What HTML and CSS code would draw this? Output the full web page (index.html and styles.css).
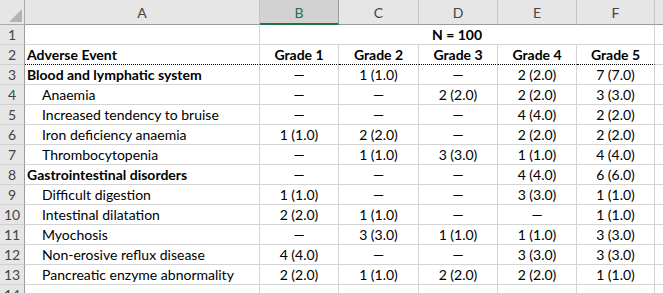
FILE: index.html
```html
<!DOCTYPE html>
<html>
<head>
<meta charset="utf-8">
<link rel="stylesheet" href="styles.css">
</head>
<body>
<div class="sheet">
  <div class="corner"><span class="tri"></span></div>
  <div class="ch">A</div>
  <div class="ch sel">B</div>
  <div class="ch">C</div>
  <div class="ch">D</div>
  <div class="ch">E</div>
  <div class="ch">F</div>
  <div class="ch last"></div>

  <div class="rh">1</div>
  <div class="c"></div>
  <div class="c merged b">N = 100</div>
  <div class="c"></div>

  <div class="rh">2</div>
  <div class="c b dot">Adverse Event</div>
  <div class="c n b dot">Grade 1</div>
  <div class="c n b dot">Grade 2</div>
  <div class="c n b dot">Grade 3</div>
  <div class="c n b dot">Grade 4</div>
  <div class="c n b dot">Grade 5</div>
  <div class="c"></div>

  <div class="rh">3</div>
  <div class="c b">Blood and lymphatic system</div>
  <div class="c n">—</div><div class="c n">1 (1.0)</div><div class="c n">—</div><div class="c n">2 (2.0)</div><div class="c n">7 (7.0)</div>
  <div class="c"></div>

  <div class="rh">4</div>
  <div class="c ind">Anaemia</div>
  <div class="c n">—</div><div class="c n">—</div><div class="c n">2 (2.0)</div><div class="c n">2 (2.0)</div><div class="c n">3 (3.0)</div>
  <div class="c"></div>

  <div class="rh">5</div>
  <div class="c ind">Increased tendency to bruise</div>
  <div class="c n">—</div><div class="c n">—</div><div class="c n">—</div><div class="c n">4 (4.0)</div><div class="c n">2 (2.0)</div>
  <div class="c"></div>

  <div class="rh">6</div>
  <div class="c ind">Iron deficiency anaemia</div>
  <div class="c n">1 (1.0)</div><div class="c n">2 (2.0)</div><div class="c n">—</div><div class="c n">2 (2.0)</div><div class="c n">2 (2.0)</div>
  <div class="c"></div>

  <div class="rh">7</div>
  <div class="c ind">Thrombocytopenia</div>
  <div class="c n">—</div><div class="c n">1 (1.0)</div><div class="c n">3 (3.0)</div><div class="c n">1 (1.0)</div><div class="c n">4 (4.0)</div>
  <div class="c"></div>

  <div class="rh">8</div>
  <div class="c b">Gastrointestinal disorders</div>
  <div class="c n">—</div><div class="c n">—</div><div class="c n">—</div><div class="c n">4 (4.0)</div><div class="c n">6 (6.0)</div>
  <div class="c"></div>

  <div class="rh">9</div>
  <div class="c ind">Difficult digestion</div>
  <div class="c n">1 (1.0)</div><div class="c n">—</div><div class="c n">—</div><div class="c n">3 (3.0)</div><div class="c n">1 (1.0)</div>
  <div class="c"></div>

  <div class="rh">10</div>
  <div class="c ind">Intestinal dilatation</div>
  <div class="c n">2 (2.0)</div><div class="c n">1 (1.0)</div><div class="c n">—</div><div class="c n">—</div><div class="c n">1 (1.0)</div>
  <div class="c"></div>

  <div class="rh">11</div>
  <div class="c ind">Myochosis</div>
  <div class="c n">—</div><div class="c n">3 (3.0)</div><div class="c n">1 (1.0)</div><div class="c n">1 (1.0)</div><div class="c n">3 (3.0)</div>
  <div class="c"></div>

  <div class="rh">12</div>
  <div class="c ind">Non-erosive reflux disease</div>
  <div class="c n">4 (4.0)</div><div class="c n">—</div><div class="c n">—</div><div class="c n">3 (3.0)</div><div class="c n">3 (3.0)</div>
  <div class="c"></div>

  <div class="rh">13</div>
  <div class="c ind">Pancreatic enzyme abnormality</div>
  <div class="c n">2 (2.0)</div><div class="c n">1 (1.0)</div><div class="c n">2 (2.0)</div><div class="c n">2 (2.0)</div><div class="c n">1 (1.0)</div>
  <div class="c"></div>

  <div class="rh">14</div>
  <div class="c"></div><div class="c"></div><div class="c"></div><div class="c"></div><div class="c"></div><div class="c"></div><div class="c"></div>
</div>
</body>
</html>
```
FILE: styles.css
```css
html, body {
  margin: 0;
  padding: 0;
  background: #fff;
}
body {
  font-family: Lato, "Open Sans", sans-serif;
  font-size: 14px;
  color: #000;
  overflow: hidden;
}
.sheet {
  display: grid;
  grid-template-columns: 25px 235px 79px 80px 79px 79px 78px 30px;
  grid-auto-rows: 20px;
  grid-template-rows: 25px;
  width: 685px;
}
.sheet > div {
  box-sizing: border-box;
  white-space: nowrap;
  overflow: visible;
}
.corner {
  background: #e6e6e6;
  border-right: 1px solid #ababab;
  border-bottom: 1px solid #ababab;
  position: relative;
}
.tri {
  position: absolute;
  left: 9px;
  top: 9px;
  width: 0;
  height: 0;
  border-left: 13px solid transparent;
  border-bottom: 13px solid #b4b4b4;
}
.ch {
  background: #e6e6e6;
  color: #444;
  text-align: center;
  line-height: 24px;
  border-right: 1px solid #c6c6c6;
  border-bottom: 1px solid #9b9b9b;
  padding-top: 1px;
}
.ch.sel {
  background: #d2d2d2;
  color: #217346;
  border-bottom: 2px solid #217346;
  border-right-color: #9b9b9b;
  line-height: 23px;
}
.rh {
  background: #e6e6e6;
  color: #444;
  text-align: center;
  line-height: 20px;
  border-right: 1px solid #9b9b9b;
  border-bottom: 1px solid #d0d0d0;
}
.c {
  border-right: 1px solid #d4d4d4;
  border-bottom: 1px solid #d4d4d4;
  line-height: 20px;
  padding-left: 2px;
}
.c.n {
  text-align: center;
  padding-left: 0;
}
.c.b {
  font-weight: 700;
}
.c.ind {
  padding-left: 17px;
}
.c.dot {
  border-bottom: 1px dotted #000;
}
.c.merged {
  grid-column: span 5;
  text-align: center;
  padding-left: 0;
}
```
